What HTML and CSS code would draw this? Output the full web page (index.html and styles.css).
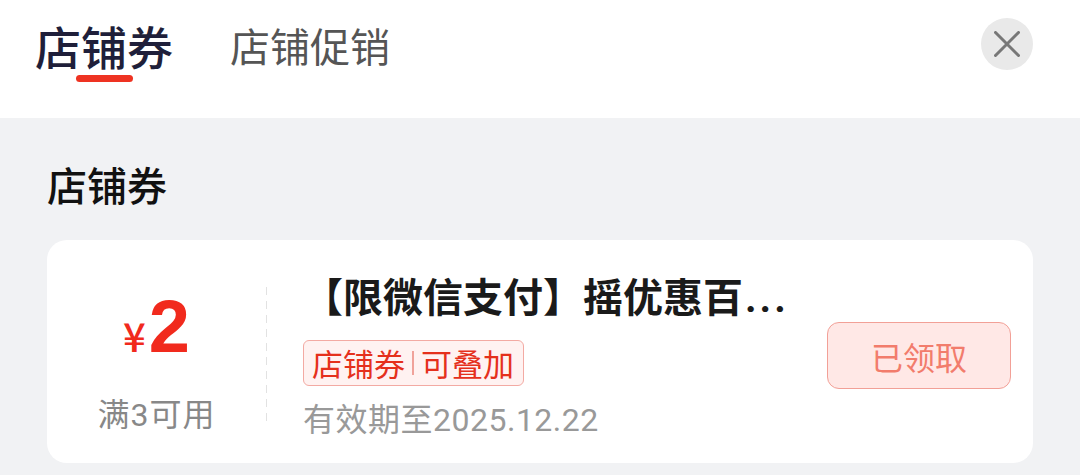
FILE: index.html
```html
<!DOCTYPE html>
<html lang="zh-CN">
<head>
<meta charset="utf-8">
<title>店铺券</title>
<link rel="stylesheet" href="styles.css">
</head>
<body>
<div class="page">
  <header class="header">
    <nav class="tabs">
      <div class="tab tab-active">
        <span class="tab-label">店铺券</span>
        <span class="tab-bar"></span>
      </div>
      <div class="tab tab-idle">
        <span class="tab-label">店铺促销</span>
      </div>
    </nav>
    <button class="close" aria-label="关闭">
      <svg width="26" height="26" viewBox="0 0 26 26"><path d="M1.5 1.5 L24.5 24.5 M24.5 1.5 L1.5 24.5" stroke="#777" stroke-width="3" stroke-linecap="round" fill="none"/></svg>
    </button>
  </header>
  <main class="content">
    <h2 class="section-title">店铺券</h2>
    <div class="coupon">
      <div class="coupon-left">
        <div class="price"><span class="yen">¥</span><span class="amount">2</span></div>
        <div class="cond">满3可用</div>
      </div>
      <div class="divider"></div>
      <div class="coupon-body">
        <div class="coupon-title">【限微信支付】摇优惠百<span class="dots">...</span></div>
        <div class="tag"><span>店铺券</span><i class="tag-sep"></i><span>可叠加</span></div>
        <div class="expire">有效期至2025.12.22</div>
      </div>
      <button class="claimed">已领取</button>
    </div>
  </main>
</div>
</body>
</html>
```
FILE: styles.css
```css
* { box-sizing: border-box; }
html, body { margin: 0; padding: 0; }
body {
  width: 1080px;
  height: 475px;
  overflow: hidden;
  background: #f1f2f4;
  font-family: "Noto Sans CJK SC", "Noto Sans", sans-serif;
}
.page { width: 1080px; }

.header {
  height: 118px;
  background: #fff;
  display: flex;
  align-items: flex-start;
  padding: 0 47px 0 35px;
}
.tabs {
  display: flex;
  gap: 57px;
  padding-top: 20px;
}
.tab {
  display: flex;
  flex-direction: column;
  align-items: center;
}
.tab-label {
  display: block;
  line-height: 50px;
  height: 50px;
  white-space: nowrap;
}
.tab-active .tab-label {
  font-size: 46px;
  font-weight: 500;
  color: #1f1f3a;
}
.tab-idle .tab-label {
  font-size: 40px;
  font-weight: 400;
  color: #555;
}
.tab-bar {
  display: block;
  width: 57px;
  height: 7px;
  margin-top: 5px;
  border-radius: 4px;
  background: #ee3322;
}
.close {
  margin-left: auto;
  margin-top: 18px;
  width: 52px;
  height: 52px;
  border: 0;
  border-radius: 50%;
  background: #e9e9e9;
  display: flex;
  align-items: center;
  justify-content: center;
  padding: 0;
}
.close svg { display: block; }

.content {
  padding: 46px 47px 0 47px;
}
.section-title {
  margin: 0;
  font-size: 40px;
  line-height: 40px;
  font-weight: 500;
  color: #111;
}
.coupon {
  margin-top: 36px;
  height: 223px;
  background: #fff;
  border-radius: 20px;
  display: flex;
  align-items: flex-start;
}
.coupon-left {
  width: 219px;
  padding-top: 50px;
  display: flex;
  flex-direction: column;
  align-items: center;
}
.price {
  height: 74px;
  line-height: 74px;
  color: #f12a1d;
  white-space: nowrap;
}
.yen {
  font-family: "Noto Sans CJK SC", sans-serif;
  font-size: 40px;
  font-weight: 500;
  margin-right: 3px;
}
.amount {
  font-family: "Liberation Sans", Arial, sans-serif;
  font-size: 74px;
  font-weight: 700;
}
.cond {
  margin-top: 35px;
  font-family: Roboto, "Noto Sans CJK SC", sans-serif;
  font-size: 32px;
  line-height: 32px;
  letter-spacing: 1px;
  color: #888;
}
.divider {
  width: 1px;
  height: 136px;
  margin-top: 47px;
  background: repeating-linear-gradient(to bottom, #e2e2e2 0 8px, transparent 8px 14px);
}
.coupon-body {
  flex: 1;
  min-width: 0;
  padding: 35px 0 0 36px;
}
.coupon-title {
  font-size: 40px;
  line-height: 40px;
  font-weight: 700;
  color: #1a1a1a;
  white-space: nowrap;
}
.dots {
  font-family: Roboto, sans-serif;
  font-weight: 700;
  letter-spacing: 3px;
  margin-left: 2px;
}
.tag {
  margin-top: 21px;
  display: inline-flex;
  align-items: center;
  height: 46px;
  padding: 0 9px 0 8px;
  border: 1px solid #f3aaa3;
  border-radius: 6px;
  background: #fff2f1;
  color: #e5301c;
  font-size: 31px;
  line-height: 44px;
}
.tag-sep {
  display: block;
  width: 2px;
  height: 24px;
  margin: 0 7px;
  background: #f0a29a;
}
.expire {
  margin-top: 18px;
  font-family: Roboto, "Noto Sans CJK SC", sans-serif;
  font-size: 32px;
  line-height: 32px;
  letter-spacing: 0.5px;
  color: #999;
  white-space: nowrap;
}
.claimed {
  margin: 82px 22px 0 0;
  width: 184px;
  height: 67px;
  border: 1px solid #f2a097;
  border-radius: 12px;
  background: #ffe8e6;
  color: #f27c6c;
  font-family: "Noto Sans CJK SC", sans-serif;
  font-size: 32px;
  padding: 0;
  flex-shrink: 0;
}
```
